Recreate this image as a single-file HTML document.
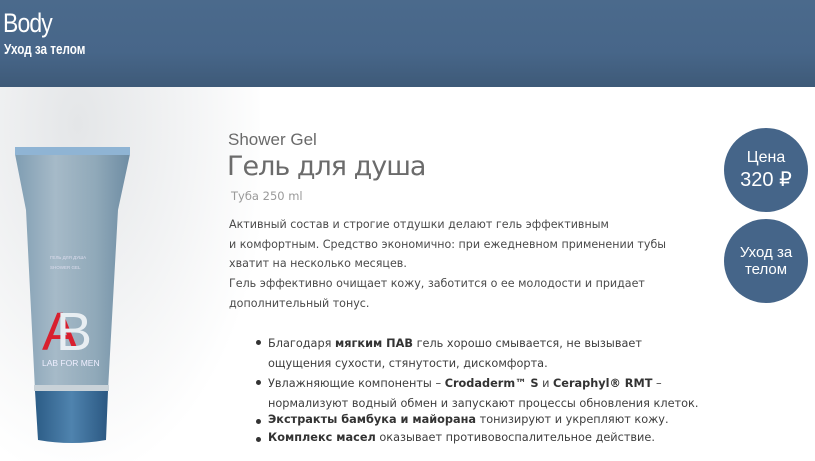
<!DOCTYPE html>
<html><head><meta charset="utf-8"><style>
body{margin:0;width:815px;height:461px;overflow:hidden;background:#fff;font-family:"DejaVu Sans",sans-serif;position:relative}
.hdr{position:absolute;left:0;top:0;width:815px;height:87px;background:linear-gradient(180deg,#4b6a8c 0%,#476689 60%,#3e5a78 100%)}
.hdr .b{position:absolute;left:3px;top:8px;color:#fff;font:27px "Liberation Sans",sans-serif;letter-spacing:-1px;transform:scaleX(0.85);transform-origin:left}
.hdr .s{position:absolute;left:4px;top:41px;color:#fff;font:bold 15px "Liberation Sans",sans-serif;transform:scaleX(0.78);transform-origin:left}
.splash{position:absolute;left:0;top:87px;width:260px;height:374px;background:radial-gradient(ellipse at 30% 10%,#e4e6e8 0%,#f2f3f4 40%,rgba(255,255,255,0) 75%)}
.t{position:absolute;white-space:nowrap;color:#4a4a4a}
.circ{position:absolute;width:84px;height:84px;border-radius:50%;background:#456589;color:#fff;font-family:"Liberation Sans",sans-serif;text-align:center;display:flex;flex-direction:column;justify-content:center}
.bl{position:absolute;left:268px;white-space:nowrap;font-size:11.3px;color:#3e3e3e}
.bl:before{content:"";position:absolute;left:-12px;top:6px;width:5px;height:5px;border-radius:50%;background:#333}
b{color:#333}
</style></head><body>
<div class="hdr"><div class="b">Body</div><div class="s">Уход за телом</div></div>
<div class="splash"></div>
<svg style="position:absolute;left:0;top:120px" width="220" height="341">
<defs><linearGradient id="tg" x1="0" x2="1"><stop offset="0" stop-color="#7f9db2"/><stop offset=".35" stop-color="#a6bac8"/><stop offset=".7" stop-color="#90a9b9"/><stop offset="1" stop-color="#6e8ca3"/></linearGradient>
<linearGradient id="cg" x1="0" x2="1"><stop offset="0" stop-color="#2c5c86"/><stop offset=".5" stop-color="#4f83ae"/><stop offset="1" stop-color="#2b5882"/></linearGradient></defs>
<path d="M15 28 L130 28 L130 34 L118 90 L108 270 L35 270 L26 90 L15 34 Z" fill="url(#tg)"/>
<rect x="15" y="27" width="115" height="8" fill="#8fb4d4"/>
<rect x="34" y="265" width="75" height="6" fill="#c9d2d8"/>
<path d="M35 271 L108 271 L106 320 Q72 326 38 320 Z" fill="url(#cg)"/>
<text x="50" y="139" font-size="4.5" fill="#dde" font-family="Liberation Sans">ГЕЛЬ ДЛЯ ДУША</text>
<text x="50" y="149" font-size="4.5" fill="#dde" font-family="Liberation Sans">SHOWER GEL</text>
<text x="42" y="230" font-size="54" fill="#d8202f" font-family="Liberation Sans">A</text>
<text x="56" y="230" font-size="54" fill="#e8eef2" font-family="Liberation Sans">B</text>
<text x="42" y="246" font-size="8.5" fill="#eef" font-family="Liberation Sans">LAB FOR MEN</text>
</svg>
<div class="t" style="left:228px;top:130px;font:17px 'Liberation Sans',sans-serif;color:#6a6a6a">Shower Gel</div>
<div class="t" style="left:227px;top:151px;font:27px 'DejaVu Sans',sans-serif;color:#6b6b6b;letter-spacing:-1px">Гель для душа</div>
<div class="t" style="left:231px;top:189px;font-size:11.5px;color:#999">Туба 250 ml</div>
<div class="t" style="left:229px;top:215px;font-size:11.1px;line-height:19.5px">Активный состав и строгие отдушки делают гель эффективным<br>и комфортным. Средство экономично: при ежедневном применении тубы<br>хватит на несколько месяцев.</div>
<div class="t" style="left:229px;top:274px;font-size:11.1px;line-height:19.5px">Гель эффективно очищает кожу, заботится о ее молодости и придает<br>дополнительный тонус.</div>
<div class="bl" style="top:334px;line-height:19.5px">Благодаря <b>мягким ПАВ</b> гель хорошо смывается, не вызывает<br>ощущения сухости, стянутости, дискомфорта.</div>
<div class="bl" style="top:374px;line-height:19.5px">Увлажняющие компоненты – <b>Crodaderm™ S</b> и <b>Ceraphyl® RMT</b> –<br>нормализуют водный обмен и запускают процессы обновления клеток.</div>
<div class="bl" style="top:413px"><b>Экстракты бамбука и майорана</b> тонизируют и укрепляют кожу.</div>
<div class="bl" style="top:431px"><b>Комплекс масел</b> оказывает противовоспалительное действие.</div>
<div class="circ" style="left:724px;top:128px"><div style="font-size:16px">Цена</div><div style="font-size:20px">320 ₽</div></div>
<div class="circ" style="left:724px;top:219px;font-size:15px;line-height:17px">Уход за<br>телом</div>
</body></html>
